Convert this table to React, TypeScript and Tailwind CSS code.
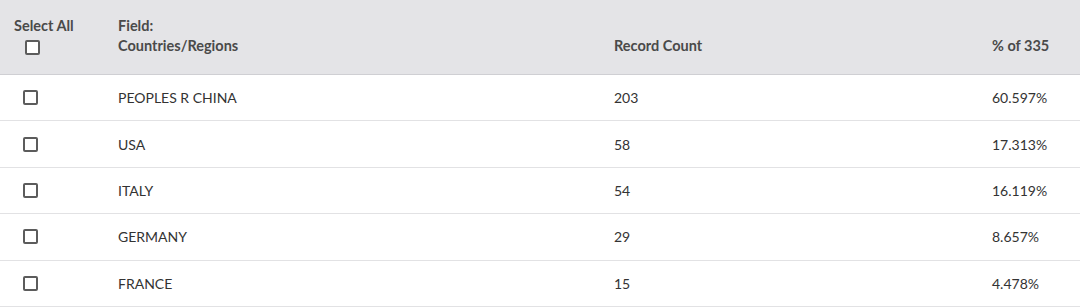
const rows = [
  { name: "PEOPLES R CHINA", count: 203, pct: "60.597%" },
  { name: "USA", count: 58, pct: "17.313%" },
  { name: "ITALY", count: 54, pct: "16.119%" },
  { name: "GERMANY", count: 29, pct: "8.657%" },
  { name: "FRANCE", count: 15, pct: "4.478%" },
];

function Box() {
  return <span className="block w-[15px] h-[15px] border-2 border-[#5c5c5c] rounded-[2px] bg-white" />;
}

export default function App() {
  return (
    <div className="w-[1080px] h-[307px] bg-white text-[14px] text-[#333] font-['Lato','Liberation_Sans',sans-serif]">
      <div className="flex h-[75px] bg-[#e4e4e7] border-b border-[#cfcfd3] font-bold text-[14.5px] text-[#4a4a4a]">
        <div className="w-[118px] pl-[14px] pt-[16px]">
          <div className="leading-[20px]">Select All</div>
          <div className="pl-[11px] pt-[4px]"><Box /></div>
        </div>
        <div className="w-[496px] pt-[16px] leading-[20px]">
          <div>Field:</div>
          <div>Countries/Regions</div>
        </div>
        <div className="w-[378px] pt-[36px] leading-[20px]">Record Count</div>
        <div className="pt-[36px] leading-[20px]">% of 335</div>
      </div>
      {rows.map((r) => (
        <div key={r.name} className="flex items-center h-[46.4px] border-b border-[#e2e2e4]">
          <div className="w-[118px] pl-[23px]"><Box /></div>
          <div className="w-[496px]">{r.name}</div>
          <div className="w-[378px]">{r.count}</div>
          <div>{r.pct}</div>
        </div>
      ))}
    </div>
  );
}
